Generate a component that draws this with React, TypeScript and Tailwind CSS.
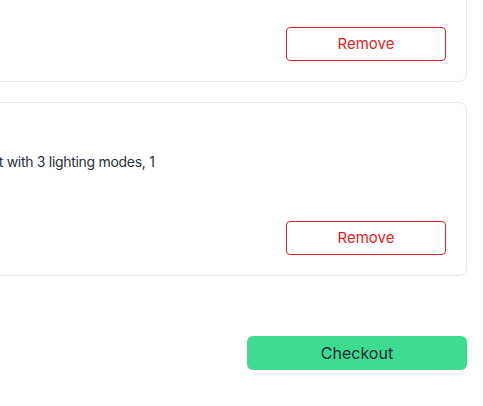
import React from "react";

const items = [
	{
		name: "Wireless Keyboard",
		desc: "A slim low-profile keyboard with quiet keys and a long battery life",
		price: "$49.00",
	},
	{
		name: "LED Desk Lamp",
		desc: "A warm-white LED desk light with 3 lighting modes, 1 year warranty.",
		price: "$29.00",
	},
];

const CartItem = ({ item }: { item: (typeof items)[number] }) => {
	return (
		<div className="w-[780px] shrink-0 rounded-lg border border-[#e8e8e8] bg-white p-5 flex flex-col gap-3">
			<div className="flex gap-4 h-[86px]">
				<div className="w-24 h-[86px] rounded-md bg-[#f3f4f6]" />
				<div className="w-[356px]">
					<h3 className="text-lg leading-7 font-semibold text-[#1f2937]">{item.name}</h3>
					<p className="mt-[1px] text-[14px] leading-5 tracking-[-0.3px] text-[#263040]">{item.desc}</p>
					<p className="text-sm font-semibold text-[#1f2937] mt-1">{item.price}</p>
				</div>
			</div>
			<div className="flex justify-end">
				<button className="w-[160px] h-[34px] rounded border border-[#e02424] text-[15px] text-[#e02424]">
					Remove
				</button>
			</div>
		</div>
	);
};

const App = () => {
	return (
		<div className="w-[483px] h-[406px] overflow-hidden bg-white font-['Inter',sans-serif]">
			<div className="w-[482px] h-[406px] border-r border-[#f2f2f2] pr-[14px] flex flex-col items-end">
				<div className="flex flex-col items-end gap-5 mt-[-92px]">
					{items.map((item) => (
						<CartItem key={item.name} item={item} />
					))}
				</div>
				<button className="mt-[60px] w-[220px] h-[34px] rounded-md bg-[#3ddc91] text-base text-[#1f2a37]">
					Checkout
				</button>
			</div>
		</div>
	);
};

export default App;
